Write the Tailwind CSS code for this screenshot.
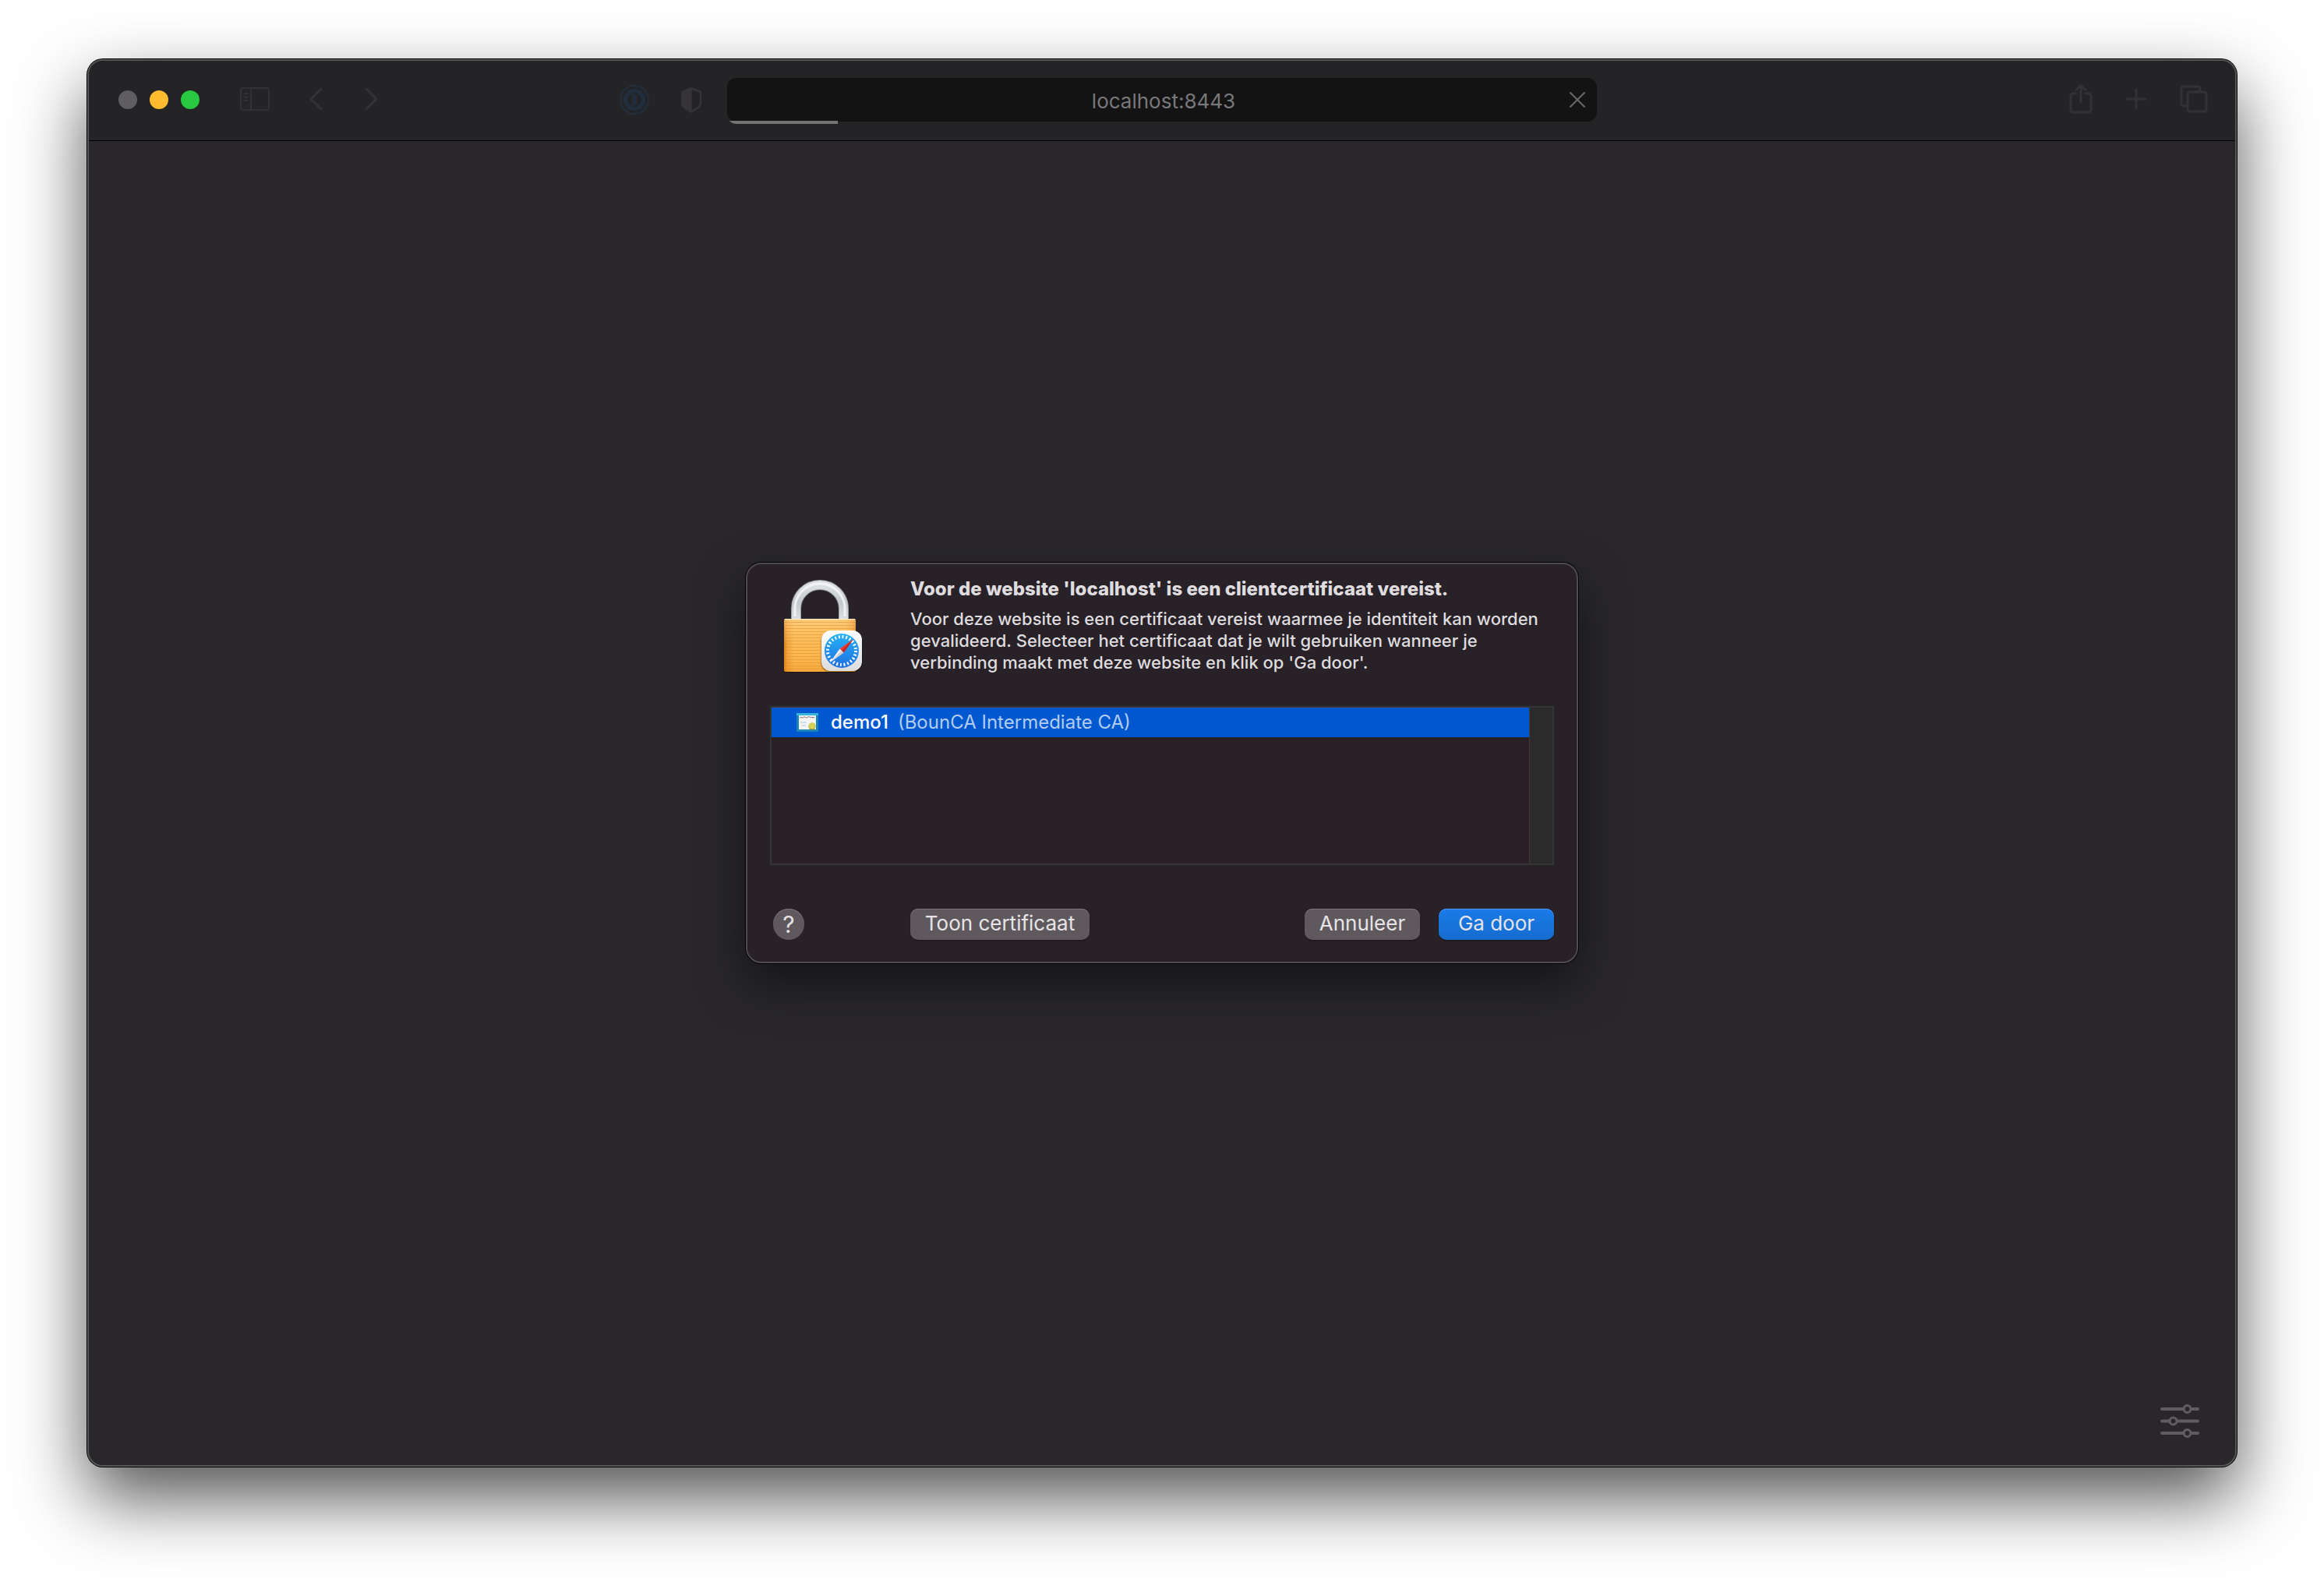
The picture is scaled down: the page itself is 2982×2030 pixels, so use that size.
<!DOCTYPE html>
<html lang="nl">
<head>
<meta charset="utf-8">
<title>localhost:8443</title>
<script src="https://cdn.jsdelivr.net/npm/@tailwindcss/browser@4"></script>
</head>
<body class="bg-white font-['Inter',sans-serif]">
<div class="flex min-h-screen flex-col px-28 pt-19 pb-37">
  <div class="flex flex-1 flex-col overflow-hidden rounded-[20px] border-2 border-[#565557] bg-[#29272a] shadow-[0_0_0_1px_#000,0_40px_90px_rgba(0,0,0,0.68)]">

    <!-- Toolbar -->
    <header class="grid h-[103px] shrink-0 grid-cols-[1fr_1116px_1fr] border-b border-black bg-[#242426] px-[38px] pt-[22px]">
      <div class="flex h-14 items-center justify-between pr-8">
        <div class="flex items-center">
          <div class="flex gap-4">
            <button class="size-6 rounded-full bg-[#5f5d60]" aria-label="Sluit"></button>
            <button class="size-6 rounded-full bg-[#febc2e]" aria-label="Minimaliseer"></button>
            <button class="size-6 rounded-full bg-[#28c840]" aria-label="Zoom"></button>
          </div>
          <button class="ml-[51px]" aria-label="Navigatiekolom">
            <svg class="h-8 w-10" viewBox="0 0 40 32" fill="none" stroke="#333134" stroke-width="2" stroke-linecap="round"><rect x="2" y="1" width="36" height="28" rx="3"/><path d="M15 1v28M6.500 8h4M6.500 12.500h4M6.500 17h4"/></svg>
          </button>
          <button class="ml-[46px]" aria-label="Vorige">
            <svg class="h-8 w-6" viewBox="0 0 24 32" fill="none" stroke="#333134" stroke-width="3" stroke-linecap="round" stroke-linejoin="round"><path d="M19 2 6 15l13 13"/></svg>
          </button>
          <button class="ml-12" aria-label="Volgende">
            <svg class="h-8 w-6" viewBox="0 0 24 32" fill="none" stroke="#333134" stroke-width="3" stroke-linecap="round" stroke-linejoin="round"><path d="M5 2l13 13L5 28"/></svg>
          </button>
        </div>
        <div class="flex items-center gap-10">
          <button aria-label="1Password">
            <svg class="size-[38px]" viewBox="0 0 38 38" fill="none" stroke="#202e3d"><circle cx="19" cy="19" r="18" stroke-width="2"/><circle cx="19" cy="19" r="11.500" stroke-width="5"/><path d="M19 12v14" stroke-width="6"/></svg>
          </button>
          <button aria-label="Privacyrapport">
            <svg class="h-9 w-7" viewBox="0 0 28 36"><path d="M14 2 27 7v16c0 5-8 9-13 12C9 32 1 28 1 23V7Z" fill="#373437"/><path d="M14.500 5 25 9v13c0 4-6 7-10.500 10Z" fill="#242426"/></svg>
          </button>
        </div>
      </div>
      <div class="relative flex h-14 items-center rounded-xl bg-[#131313]">
        <div class="absolute inset-x-0 top-0 h-[59px] overflow-hidden rounded-xl"><div class="absolute bottom-0 left-0 h-1 w-[142px] bg-[#747376]"></div></div>
        <input class="relative w-full bg-transparent pt-0.5 pl-1 text-center text-[26px] text-[#79787a] outline-none" type="text" value="localhost:8443" aria-label="Adres">
        <button class="absolute right-[14px]" aria-label="Stop laden">
          <svg class="size-[22px]" viewBox="0 0 22 22" fill="none" stroke="#69686a" stroke-width="2" stroke-linecap="round"><path d="M2 2l18 18M20 2 2 20"/></svg>
        </button>
      </div>
      <div class="-mr-[3px] flex h-14 items-center justify-end">
        <button class="pb-0.5" aria-label="Deel">
          <svg class="h-[38px] w-[30px]" viewBox="0 0 30 38" fill="none" stroke="#333134" stroke-width="3" stroke-linecap="round" stroke-linejoin="round"><path d="M9 12H5a3 3 0 0 0-3 3v18a3 3 0 0 0 3 3h20a3 3 0 0 0 3-3V15a3 3 0 0 0-3-3h-4M15 23V2M9 7.500 15 1.500l6 6"/></svg>
        </button>
        <button class="ml-[42px] pb-0.5" aria-label="Nieuw tabblad">
          <svg class="size-[28px]" viewBox="0 0 28 28" fill="none" stroke="#333134" stroke-width="3" stroke-linecap="round"><path d="M14 2v24M2 14h24"/></svg>
        </button>
        <button class="ml-[42px] pb-0.5" aria-label="Taboverzicht">
          <svg class="size-9" viewBox="0 0 36 36" fill="none" stroke="#333134" stroke-width="3"><rect x="10" y="9" width="24" height="25" rx="3"/><path d="M10 27H5a3 3 0 0 1-3-3V5a3 3 0 0 1 3-3h18a3 3 0 0 1 3 3v4"/></svg>
        </button>
      </div>
    </header>

    <!-- Page content -->
    <main class="flex flex-1 flex-col items-center justify-between pt-[541px]">
      <section role="dialog" aria-labelledby="dialog-title" class="w-[1068px] rounded-[20px] border-2 border-[#4f4a50] bg-[#282127] px-[29px] pb-7 shadow-[0_0_0_1px_#000,0_26px_60px_rgba(0,0,0,0.5)]">
        <div class="flex h-[182px] pt-4">
          <svg class="mt-0.5 ml-[14px] h-[124px] w-[108px] shrink-0" viewBox="1002 743 108 124">
            <defs>
              <linearGradient id="body" x1="0" x2="1"><stop offset="0" stop-color="#d9790f"/><stop offset=".05" stop-color="#f0a03a"/><stop offset=".14" stop-color="#fdb850"/><stop offset=".85" stop-color="#fbb54c"/><stop offset=".95" stop-color="#ee9830"/><stop offset="1" stop-color="#d9790f"/></linearGradient>
              <linearGradient id="glow" x1="0" y1="0" x2="0" y2="1"><stop offset="0" stop-color="#ffe0a8" stop-opacity=".5"/><stop offset=".5" stop-color="#ffd080" stop-opacity=".1"/><stop offset="1" stop-color="#e88a10" stop-opacity=".35"/></linearGradient>
              <linearGradient id="steel" x1="0" y1="0" x2="0" y2="1"><stop offset="0" stop-color="#dfe2e4"/><stop offset=".5" stop-color="#c3c8cc"/><stop offset="1" stop-color="#dde0e3"/></linearGradient>
              <linearGradient id="sky" x1="0" y1="0" x2="0" y2="1"><stop offset="0" stop-color="#25b3f8"/><stop offset="1" stop-color="#1f6fe0"/></linearGradient>
              <linearGradient id="tile" x1="0" y1="0" x2="0" y2="1"><stop offset="0" stop-color="#fff"/><stop offset="1" stop-color="#dcdcdc"/></linearGradient>
              <pattern id="ribs" width="4" height="4" patternUnits="userSpaceOnUse"><path d="M0 3.500h4" stroke="#d98a2a" stroke-opacity=".45"/></pattern>
            </defs>
            <path d="M1021.500 796v-14a30.500 30.500 0 0 1 61 0v14" fill="none" stroke="#9aa0a6" stroke-width="13"/>
            <path d="M1021.500 796v-14a30.500 30.500 0 0 1 61 0v14" fill="none" stroke="url(#steel)" stroke-width="11"/>
            <path d="M1020 792v-10a32 32 0 0 1 64 0v10" fill="none" stroke="#f7f8f9" stroke-width="3" stroke-opacity=".8"/>
            <rect x="1006" y="796" width="92" height="68" rx="2" fill="#1a1418"/>
            <rect x="1006" y="795" width="92" height="68" rx="2" fill="url(#body)"/>
            <rect x="1006" y="795" width="92" height="68" rx="2" fill="url(#glow)"/>
            <rect x="1006" y="798" width="92" height="65" fill="url(#ribs)"/>
            <path d="M1007 795.500h90" stroke="#fff0cf"/>
            <rect x="1053" y="811" width="54" height="53" rx="13" fill="#000" fill-opacity=".25"/>
            <rect x="1054" y="810" width="52" height="52" rx="12" fill="url(#tile)"/>
            <circle cx="1080" cy="836" r="22" fill="url(#sky)"/>
            <circle cx="1080" cy="836" r="18" fill="none" stroke="#fff" stroke-width="4" stroke-dasharray="2 2.712"/>
            <path d="M1095 821 1077.500 833.500l5 5Z" fill="#ee3b32"/>
            <path d="M1065 851 1077.500 833.500l5 5Z" fill="#f4f4f4"/>
            <path d="M1095 821 1080 836l2.500 2.500Z" fill="#c5221f"/>
            <path d="M1065 851 1080 836l2.500 2.500Z" fill="#c9ccd0"/>
          </svg>
          <div class="ml-[58px] text-[#dfdcdf]">
            <h1 id="dialog-title" class="text-[24px] leading-8 font-extrabold whitespace-nowrap">Voor de website 'localhost' is een clientcertificaat vereist.</h1>
            <p class="mt-2 text-[22px] leading-7 font-medium whitespace-nowrap">Voor deze website is een certificaat vereist waarmee je identiteit kan worden<br>gevalideerd. Selecteer het certificaat dat je wilt gebruiken wanneer je<br>verbinding maakt met deze website en klik op 'Ga door'.</p>
          </div>
        </div>

        <div class="flex h-[204px] border-2 border-[#343535] bg-[#2b1f26]">
          <ul class="flex-1" role="listbox" aria-label="Certificaten">
            <li class="flex h-[38px] items-center bg-[#0058d0] pl-8 text-[24px] text-white" role="option" aria-selected="true">
              <svg class="h-6 w-7" viewBox="0 0 28 24"><rect width="28" height="24" fill="#1a86b8"/><rect width="28" height="3" fill="#35b5dc"/><rect x="3" y="3" width="22" height="18" fill="#f4f4f1"/><path d="M4 6.500c2-3 3 1 5-1s3 2 5 0 4 1 9 0" fill="none" stroke="#666"/><path d="M5 12c2-1 3 1 5 0s2 1 3 0M7 16h5" fill="none" stroke="#a3c6ea"/><circle cx="20" cy="17" r="4.500" fill="#8f8d2c"/><circle cx="20" cy="16.500" r="4" fill="#d6d252"/></svg>
              <span class="ml-4 font-medium">demo1</span><span class="ml-3 text-[#b3cdf1]">(BounCA Intermediate CA)</span>
            </li>
          </ul>
          <div class="w-[30px] border-l border-[#3c3c3c] bg-[#2b2b2b]"></div>
        </div>

        <div class="mt-14 flex h-10 items-center pl-1 text-[26px] text-[#e6e4e6]">
          <button class="size-10 rounded-full bg-[#5f595e] text-[30px] leading-10 shadow-[inset_0_1px_0_#7a757a]" aria-label="Help">?</button>
          <button class="ml-34 h-10 w-[230px] rounded-[10px] bg-[#5f595e] pb-0.5 leading-9 shadow-[inset_0_1px_0_#7a757a,0_1px_2px_rgba(0,0,0,0.4)]">Toon certificaat</button>
          <button class="ml-auto h-10 w-[148px] rounded-[10px] bg-[#5f595e] pb-0.5 leading-9 shadow-[inset_0_1px_0_#7a757a,0_1px_2px_rgba(0,0,0,0.4)]">Annuleer</button>
          <button class="ml-6 h-10 w-[148px] rounded-[10px] bg-linear-to-b from-[#1a7ae8] to-[#156cce] pb-0.5 leading-9 shadow-[inset_0_1px_0_#4a9bf0,0_1px_2px_rgba(0,0,0,0.4)]">Ga door</button>
        </div>
      </section>

      <button class="mr-[45px] mb-[34px] self-end" aria-label="Instellingen startpagina">
        <svg class="h-11 w-[52px]" viewBox="0 0 52 44" fill="none" stroke="#5f5d60" stroke-width="4" stroke-linecap="round"><path d="M3 6h28M41 6h8M3 21.500h10M23 21.500h26M3 37h28M41 37h8"/><g stroke-width="3"><circle cx="35.500" cy="6" r="4.500"/><circle cx="17.500" cy="21.500" r="4.500"/><circle cx="35.500" cy="37" r="4.500"/></g></svg>
      </button>
    </main>
  </div>
</div>
</body>
</html>
